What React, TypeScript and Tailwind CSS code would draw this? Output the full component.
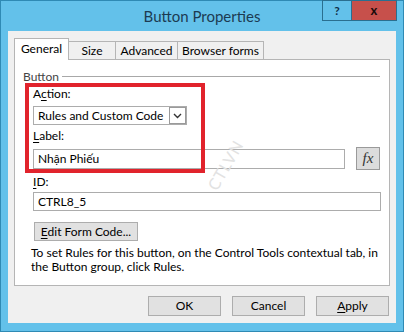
import React from 'react';

const font = { fontFamily: 'Lato, "Noto Sans", sans-serif' };

const Mn = ({ children }: { children: React.ReactNode }) => <span className="underline underline-offset-2">{children}</span>;

const tabs = [
  { name: 'Size', w: 'w-[47px]' },
  { name: 'Advanced', w: 'w-[62px]' },
  { name: 'Browser forms', w: 'w-[86px]' },
];

export default function App() {
  return (
    <div
      className="w-[404px] h-[332px] bg-[#63c1ea] border border-[#2f8ab4] flex flex-col text-[12px] text-black"
      style={font}
    >
      {/* title bar */}
      <div className="h-[30px] flex items-start">
        <div className="w-[81px]" />
        <div className="flex-1 h-[30px] flex items-center justify-center text-[15px] text-[#1c3b52]">
          Button Properties
        </div>
        <div className="flex -mt-px">
          <div className="w-[30px] h-[21px] border border-[#2a6f90] bg-[#63c1ea] flex items-center justify-center text-[12px] font-bold text-[#10304a]">
            ?
          </div>
          <div className="w-[45px] h-[21px] border border-[#2a6f90] border-l-0 bg-[#c7504b] flex items-center justify-center text-[13px] font-bold text-[#1a0a0a]">
            x
          </div>
        </div>
        <div className="w-[6px]" />
      </div>

      {/* client */}
      <div className="relative mx-[7px] mb-[8px] flex-1 bg-[#f0f0f0] flex flex-col pt-[6px] px-[6px]">
        {/* tabs */}
        <div className="flex items-end h-[22px] relative z-10">
          <div className="w-[55px] h-[22px] bg-white border border-b-0 border-[#b5b5b5] flex items-center justify-center -mb-px pb-[1px]">
            General
          </div>
          {tabs.map((t) => (
            <div
              key={t.name}
              className={`${t.w} h-[18px] bg-[#f0f0f0] border border-l-0 border-[#b5b5b5] border-b-0 flex items-center justify-center whitespace-nowrap`}
            >
              {t.name}
            </div>
          ))}
        </div>

        {/* panel */}
        <div className="h-[227px] bg-white border border-[#b5b5b5] pl-[8px] pr-[9px] pt-[9px] flex flex-col">
          <div className="flex items-center h-[15px]">
            <span className="text-[#444]">Button</span>
            <div className="flex-1 h-px bg-[#a8a8a8] ml-[3px]" />
          </div>

          <div className="pl-[10px] flex flex-col">
            <div className="h-[16px] mt-[2px] leading-[16px]">
              A<Mn>c</Mn>tion:
            </div>
            <div className="mt-[4px] w-[154px] h-[19px] border border-[#acacac] flex items-center justify-between pl-[4px] whitespace-nowrap">
              <span>Rules and Custom Code</span>
              <div className="w-[17px] h-[17px] border border-[#9a9a9a] bg-white flex items-center justify-center">
                <svg width="9" height="6" viewBox="0 0 9 6">
                  <path d="M1 1 L4.5 4.5 L8 1" fill="none" stroke="#333" strokeWidth="1.4" />
                </svg>
              </div>
            </div>

            <div className="h-[16px] mt-[3px] leading-[16px]">
              <Mn>L</Mn>abel:
            </div>
            <div className="mt-[3px] flex items-center">
              <div className="w-[312px] h-[20px] border border-[#acacac] flex items-center pl-[4px]">Nhận Phiếu</div>
              <div className="ml-[11px] w-[24px] h-[23px] border border-[#9a9a9a] bg-[#dcdcdc] flex items-center justify-center text-[15px] italic text-[#333]" style={{ fontFamily: '"Liberation Serif", serif' }}>
                fx
              </div>
            </div>

            <div className="h-[16px] mt-[4px] leading-[16px]">
              <Mn>I</Mn>D:
            </div>
            <div className="mt-[2px] w-[348px] h-[19px] border border-[#acacac] flex items-center pl-[4px]">CTRL8_5</div>

            <div className="mt-[11px] w-[104px] h-[19px] ml-px border border-[#adadad] bg-[#e1e1e1] flex items-center justify-center whitespace-nowrap">
              <span>
                <Mn>E</Mn>dit Form Code...
              </span>
            </div>

            <div className="mt-[5px] -ml-[2px] leading-[14px] w-[352px]">
              To set Rules for this button, on the Control Tools contextual tab, in the Button group, click Rules.
            </div>
          </div>
        </div>

        {/* buttons */}
        <div className="flex justify-end gap-[11px] mt-[10px] pr-px">
          <div className="w-[73px] h-[20px] border border-[#adadad] bg-[#e1e1e1] flex items-center justify-center">OK</div>
          <div className="w-[73px] h-[20px] border border-[#adadad] bg-[#e1e1e1] flex items-center justify-center">Cancel</div>
          <div className="w-[73px] h-[20px] border border-[#adadad] bg-[#e1e1e1] flex items-center justify-center">
            <span>
              <Mn>A</Mn>pply
            </span>
          </div>
        </div>

        {/* annotation box */}
        <div className="absolute left-[17px] top-[52px] w-[180px] h-[90px] border-[4px] border-[#e1232c] pointer-events-none" />

        {/* watermark */}
        <div className="absolute left-[190px] top-[122px] -rotate-[60deg] text-[16px] tracking-[1px] text-[#e2e2e2] pointer-events-none">
          CTLVN
        </div>
      </div>
    </div>
  );
}
